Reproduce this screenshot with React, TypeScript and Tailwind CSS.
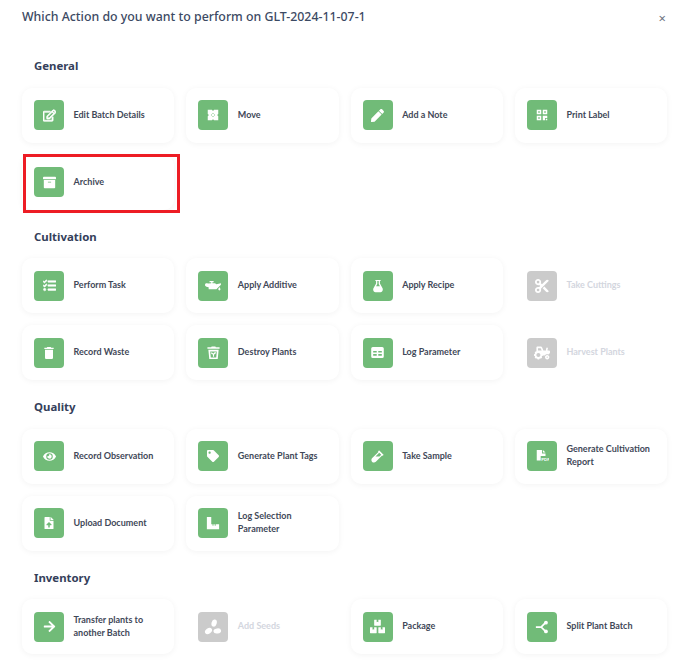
import type { ReactNode } from "react";
import {
  FaArchive, FaArrowRight, FaBoxes, FaEye, FaFileUpload, FaPen, FaRegEdit,
  FaTag, FaTasks, FaTractor, FaVial,
} from "react-icons/fa";
import { FaScissors } from "react-icons/fa6";
import { MdDelete } from "react-icons/md";

const MoveIcon = () => (
  <svg viewBox="0 0 16 16" className="h-[12px] w-[12px]" fill="currentColor">
    <path d="M1 1h5.500L8 2.500 9.500 1H15v5.500L13.500 8 15 9.500V15H9.500L8 13.500 6.500 15H1V9.500L2.500 8 1 6.500z" />
    <path d="M8 5 7 6.600h2zM8 11l1-1.600H7zM5 8l1.600 1V7zM11 8 9.400 7v2z" fill="#71bb78" />
  </svg>
);

const QrIcon = () => (
  <svg viewBox="0 0 16 16" className="h-[12px] w-[12px]" fill="currentColor">
    <path fillRule="evenodd" d="M1 1h6v6H1zm2 2v2h2V3zM9 1h6v6H9zm2 2v2h2V3zM1 9h6v6H1zm2 2v2h2v-2z" />
    <path d="M9 9h6v3h-3v3H9zM13 13h2v2h-2z" />
  </svg>
);

const OilCanIcon = () => (
  <svg viewBox="0 0 18 11" className="h-[10px] w-[16.400px]" fill="currentColor">
    <path d="M5 0h4.500v1.500H8.200V2.500H11l1.500 1.200L17.500 2.500v1.500L12.500 9H4V6.800L1.600 6.200C.500 5.900 0 5.200 0 4.200 0 3.100.800 2.400 1.800 2.500L4 2.700 6.800 2.500V1.500H5z" />
    <path d="M15.800 6.500c.6 1 1.200 1.700 1.200 2.700a1.200 1.200 0 0 1-2.400 0c0-1 .6-1.700 1.200-2.700z" />
  </svg>
);

const BinLeafIcon = () => (
  <svg viewBox="0 0 16 16" className="h-[15px] w-[15px]" fill="currentColor">
    <path d="M1.500 2.500h4l.5-1h4l.5 1h4V4h-13z" />
    <path fillRule="evenodd" d="M2.500 5h11l-1 10h-9zm2 1.800.6 6.400h5.800l.6-6.400z" />
    <path d="M7.400 12.500V10.200C6.200 10.100 5.400 9.300 5.200 8c1.200 0 2.100.4 2.600 1.200C8.200 8.300 9.200 7.800 10.700 7.800 10.500 9.200 9.600 10.100 8.600 10.200v2.300z" />
  </svg>
);

const FlaskIcon = () => (
  <svg viewBox="0 0 16 16" className="h-[14px] w-[14px]" fill="currentColor">
    <path d="M5 1h6v1.400h-.8v2.800l3 5.300c.8 1.600 0 4.500-2.200 4.500H5c-2.200 0-3-2.900-2.200-4.500l3-5.300V2.400H5z" />
    <path d="M7.200 2.400h1.600v3.200l1.400 2.600H5.800l1.400-2.600z" fill="#71bb78" />
  </svg>
);

const TableIcon = () => (
  <svg viewBox="0 0 16 14" className="h-[11px] w-[13px]" fill="currentColor">
    <path fillRule="evenodd" d="M2 0h12a2 2 0 0 1 2 2v10a2 2 0 0 1-2 2H2a2 2 0 0 1-2-2V2a2 2 0 0 1 2-2zm.500 5v2h4.500V5zm6.500 0v2h4.500V5zM2.500 9v2h4.500V9zM9 9v2h4.500V9z" />
  </svg>
);

const RulerIcon = () => (
  <svg viewBox="0 0 16 16" className="h-[14px] w-[14px]" fill="currentColor">
    <path d="M1 1h5v8.500h1.500V11h1V9.500h1.500V11h1V9.500H15V15H1z" />
  </svg>
);

const PdfIcon = () => (
  <svg viewBox="0 0 16 16" className="h-[14px] w-[14px]" fill="currentColor">
    <path d="M2 1h6v4h4v3H6.500v5H2z" />
    <path d="M9 1l3 3H9z" />
    <text x="7" y="13.500" fontSize="5" fontWeight="700" fontFamily="'Liberation Sans', sans-serif">PDF</text>
  </svg>
);

const SeedsIcon = () => (
  <svg viewBox="0 0 16 16" className="h-[18px] w-[18px]" fill="currentColor">
    <ellipse cx="9" cy="4.500" rx="2.300" ry="3.200" transform="rotate(15 9 4.500)" />
    <ellipse cx="4" cy="11.500" rx="3.400" ry="2.400" transform="rotate(-35 4 11.500)" />
    <ellipse cx="11.800" cy="11.500" rx="3.400" ry="2.300" transform="rotate(-8 11.800 11.500)" />
  </svg>
);

const SplitIcon = () => (
  <svg viewBox="0 0 16 16" className="h-[14px] w-[14px]" fill="none" stroke="currentColor" strokeWidth="2">
    <path d="M1 8h6l5-5M7 8l5 5" />
    <circle cx="12.500" cy="3" r="2.200" fill="currentColor" stroke="none" />
    <circle cx="12.500" cy="13" r="2.200" fill="currentColor" stroke="none" />
  </svg>
);

type Action = { label: string; icon: ReactNode; disabled?: boolean };

const i = "h-[13px] w-[13px]";

const sections: { title: string; actions: Action[] }[] = [
  {
    title: "General",
    actions: [
      { label: "Edit Batch Details", icon: <FaRegEdit className="h-[13px] w-[13px] stroke-[30]" /> },
      { label: "Move", icon: <MoveIcon /> },
      { label: "Add a Note", icon: <FaPen className={i} /> },
      { label: "Print Label", icon: <QrIcon /> },
      { label: "Archive", icon: <FaArchive className={i} /> },
    ],
  },
  {
    title: "Cultivation",
    actions: [
      { label: "Perform Task", icon: <FaTasks className="h-[13px] w-[13px] stroke-[20]" /> },
      { label: "Apply Additive", icon: <OilCanIcon /> },
      { label: "Apply Recipe", icon: <FlaskIcon /> },
      { label: "Take Cuttings", icon: <FaScissors className="h-[14px] w-[14px]" />, disabled: true },
      { label: "Record Waste", icon: <MdDelete className="h-[16px] w-[16px]" /> },
      { label: "Destroy Plants", icon: <BinLeafIcon /> },
      { label: "Log Parameter", icon: <TableIcon /> },
      { label: "Harvest Plants", icon: <FaTractor className="h-[16px] w-[16px]" />, disabled: true },
    ],
  },
  {
    title: "Quality",
    actions: [
      { label: "Record Observation", icon: <FaEye className={i} /> },
      { label: "Generate Plant Tags", icon: <FaTag className="h-[12px] w-[12px]" /> },
      { label: "Take Sample", icon: <FaVial className={i} /> },
      { label: "Generate Cultivation Report", icon: <PdfIcon /> },
      { label: "Upload Document", icon: <FaFileUpload className="h-[12px] w-[12px]" /> },
      { label: "Log Selection Parameter", icon: <RulerIcon /> },
    ],
  },
  {
    title: "Inventory",
    actions: [
      { label: "Transfer plants to another Batch", icon: <FaArrowRight className={i} /> },
      { label: "Add Seeds", icon: <SeedsIcon />, disabled: true },
      { label: "Package", icon: <FaBoxes className="h-[15px] w-[15px]" /> },
      { label: "Split Plant Batch", icon: <SplitIcon /> },
    ],
  },
];

function ActionCard({ label, icon, disabled }: Action) {
  return (
    <div className={`relative flex h-[55px] items-center gap-[9.5px] rounded-[10px] bg-white px-3 ${disabled ? "" : "shadow-[0_1px_6px_rgba(0,0,0,0.05)]"}`}>
      <div className={`flex h-[30px] w-[30px] shrink-0 items-center justify-center rounded-[4px] text-white ${disabled ? "bg-[#cbcbcb]" : "bg-[#71bb78]"}`}>
        {icon}
      </div>
      <span className={`mb-[2px] font-['Lato',sans-serif] text-[9px] font-bold leading-[13px] ${disabled ? "text-[#d3d6de]" : "text-[#3f4858]"}`}>{label}</span>
      {label === "Archive" && (
        <div className="absolute left-[1px] top-[-1px] h-[59px] w-[157px] border-[3px] border-[#ed1c24]" />
      )}
    </div>
  );
}

export default function App() {
  return (
    <div className="h-[661px] w-[688px] overflow-hidden bg-white font-['Noto_Sans',sans-serif]">
      <div className="flex items-center justify-between pl-[22px] pr-[22px] pt-[7px]">
        <h1 className="text-[12.35px] font-medium leading-[18px] text-[#3c4a63]">Which Action do you want to perform on GLT-2024-11-07-1</h1>
        <span className="mt-[2px] text-[13px] leading-[18px] text-[#6b7280]">×</span>
      </div>
      <div className="flex flex-col gap-[18px] px-[22px] pt-[30px]">
        {sections.map((section) => (
          <section key={section.title}>
            <h2 className="mb-[12.5px] pl-3 text-[11.4px] font-bold leading-[18px] text-[#34405a]">{section.title}</h2>
            <div className="grid grid-cols-[repeat(4,152.33px)] gap-[12px]">
              {section.actions.map((action) => (
                <ActionCard key={action.label} {...action} />
              ))}
            </div>
          </section>
        ))}
      </div>
    </div>
  );
}
